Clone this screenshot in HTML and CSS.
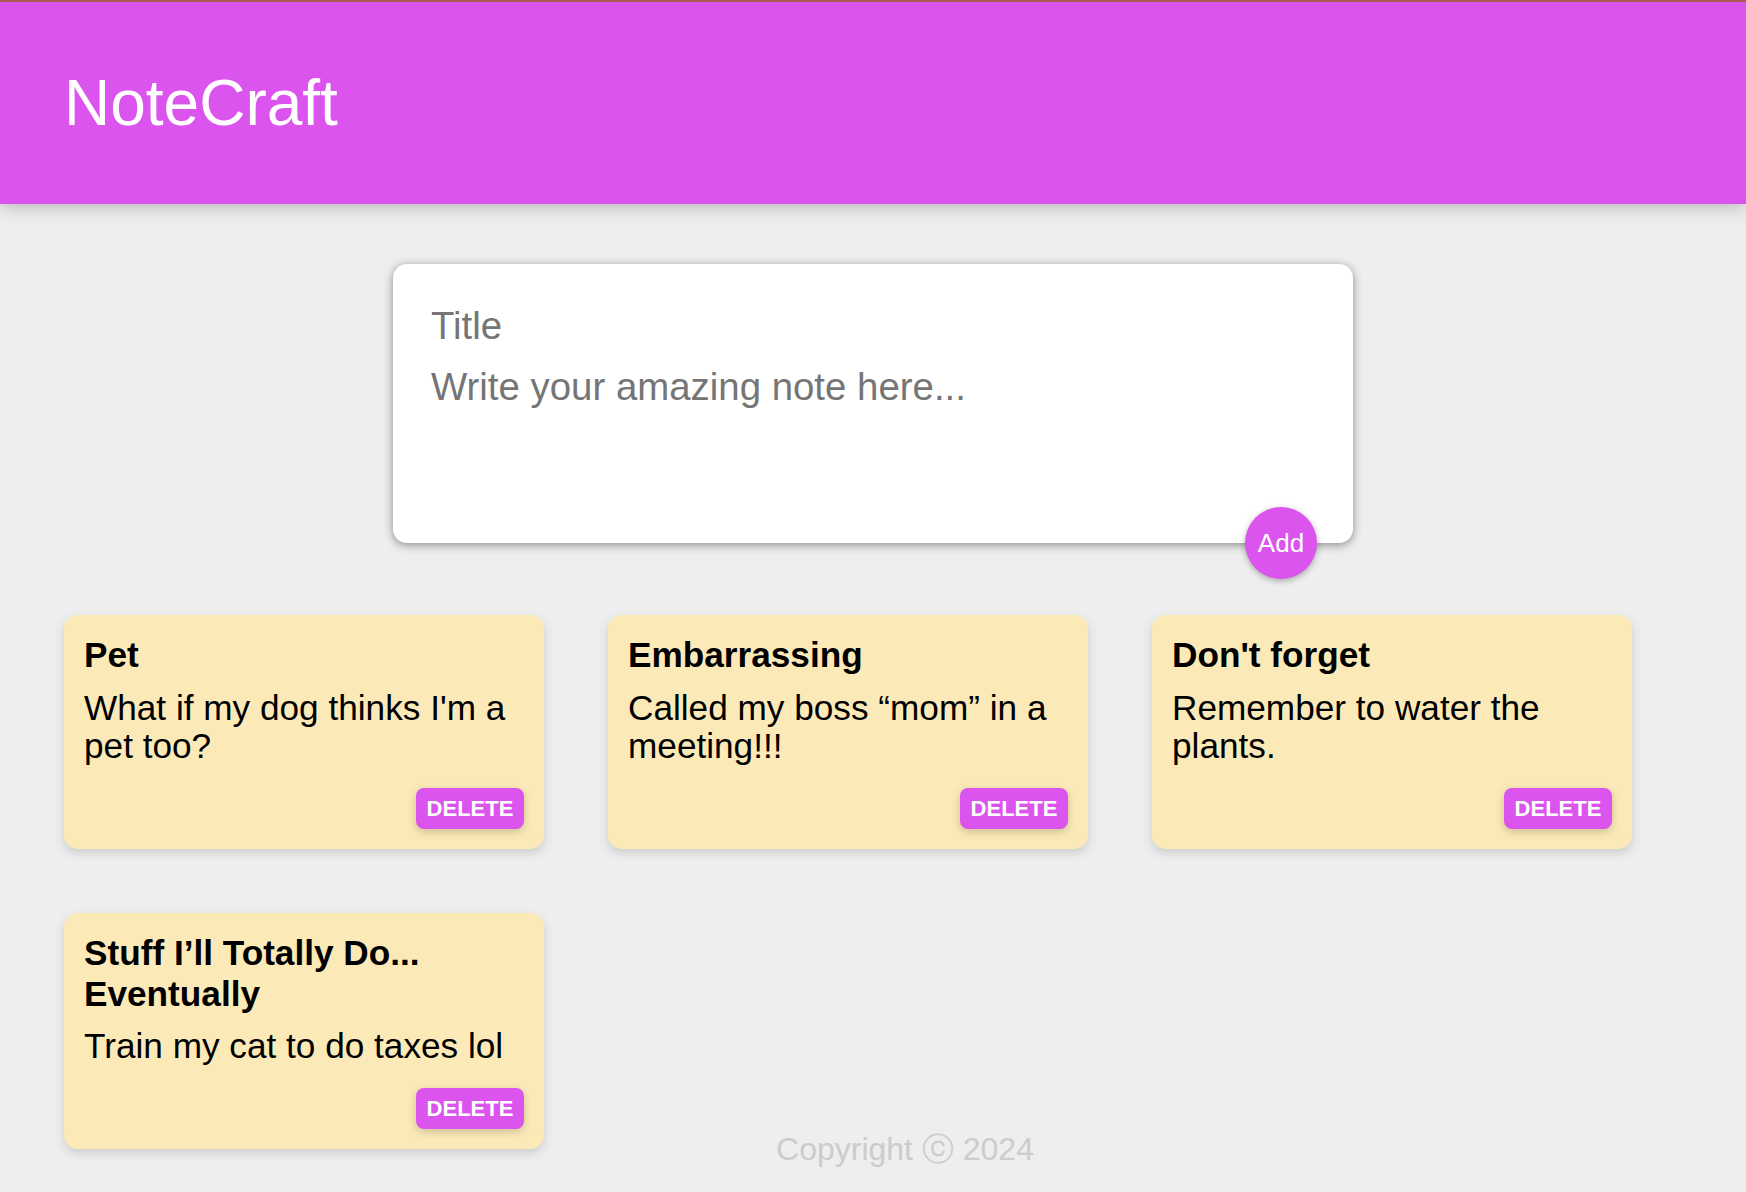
FILE: index.html
```html
<!DOCTYPE html>
<html lang="en">
<head>
<meta charset="utf-8">
<title>NoteCraft</title>
<link rel="stylesheet" href="styles.css">
</head>
<body>
<header class="app-header">
  <h1 class="app-title">NoteCraft</h1>
</header>

<form class="create-note">
  <input class="create-title" name="title" placeholder="Title">
  <textarea class="create-content" name="content" placeholder="Write your amazing note here..." rows="3"></textarea>
  <button class="add-btn" type="button">Add</button>
</form>

<main class="notes">
  <div class="note">
    <h1 class="note-title">Pet</h1>
    <p class="note-body">What if my dog thinks I'm a pet too?</p>
    <div class="note-actions"><button class="delete-btn">DELETE</button></div>
  </div>
  <div class="note">
    <h1 class="note-title">Embarrassing</h1>
    <p class="note-body">Called my boss “mom” in a meeting!!!</p>
    <div class="note-actions"><button class="delete-btn">DELETE</button></div>
  </div>
  <div class="note">
    <h1 class="note-title">Don't forget</h1>
    <p class="note-body">Remember to water the plants.</p>
    <div class="note-actions"><button class="delete-btn">DELETE</button></div>
  </div>
  <div class="note">
    <h1 class="note-title">Stuff I’ll Totally Do... Eventually</h1>
    <p class="note-body">Train my cat to do taxes lol</p>
    <div class="note-actions"><button class="delete-btn">DELETE</button></div>
  </div>
</main>

<footer class="app-footer">
  <p class="footer-text">Copyright ⓒ 2024</p>
</footer>
</body>
</html>
```

FILE: styles.css
```css
* {
  box-sizing: border-box;
}

html, body {
  height: 100%;
}

body {
  margin: 0;
  padding: 0 32px;
  background: #eeeeee;
  font-family: "Liberation Sans", Arial, Helvetica, sans-serif;
  overflow: hidden;
}

.app-header {
  margin: 0 -32px;
  padding: 64px 64px 64px;
  background: #dc54ee;
  border-top: 2px solid #a85a50;
  box-shadow: 0 0 20px 0 rgba(0, 0, 0, 0.3);
}

.app-title {
  margin: 0;
  color: #ffffff;
  font-size: 64px;
  font-weight: normal;
  line-height: 74px;
}

.create-note {
  position: relative;
  width: 960px;
  height: 279px;
  margin: 60px auto 40px;
  padding: 30px;
  background: #ffffff;
  border-radius: 14px;
  box-shadow: 0 2px 10px rgb(138, 137, 137);
}

.create-title,
.create-content {
  display: block;
  width: 100%;
  border: none;
  outline: none;
  padding: 8px;
  font-family: inherit;
  font-size: 38.4px;
  color: #333;
  background: transparent;
  resize: none;
}

.create-title {
  height: 61px;
  padding-top: 9px;
  padding-bottom: 7px;
}

.create-content {
  height: 157px;
  padding-top: 10px;
}

.create-title::placeholder,
.create-content::placeholder {
  color: #757575;
}

.add-btn {
  position: absolute;
  right: 36px;
  bottom: -36px;
  width: 72px;
  height: 72px;
  border: none;
  border-radius: 50%;
  background: #dc54ee;
  color: #ffffff;
  font-family: inherit;
  font-size: 26px;
  padding: 0;
  box-shadow: 0 2px 6px rgba(0, 0, 0, 0.3);
}

.notes {
  display: flex;
  flex-wrap: wrap;
  align-items: flex-start;
}

.note {
  width: 480px;
  margin: 32px;
  padding: 20px;
  background: #fbeab8;
  border-radius: 14px;
  box-shadow: 0 4px 10px #cccccc;
}

.note-title {
  margin: 0 0 13px;
  font-size: 35.2px;
  font-weight: bold;
  line-height: 40.5px;
  color: #000;
}

.note-body {
  margin: 0 0 22.6px;
  font-size: 35.2px;
  line-height: 38.6px;
  color: #000;
}

.note-actions {
  display: flex;
  justify-content: flex-end;
}

.delete-btn {
  width: 108px;
  height: 41px;
  padding: 0;
  border: none;
  border-radius: 8px;
  background: #dc54ee;
  color: #ffffff;
  font-family: inherit;
  font-size: 22px;
  font-weight: bold;
  box-shadow: 0 3px 8px rgba(0, 0, 0, 0.18);
}

.app-footer {
  position: absolute;
  left: 0;
  right: 0;
  bottom: 24px;
  padding-left: 64px;
  text-align: center;
}

.footer-text {
  margin: 0;
  color: #cccccc;
  font-size: 32px;
  line-height: 37px;
}
```
